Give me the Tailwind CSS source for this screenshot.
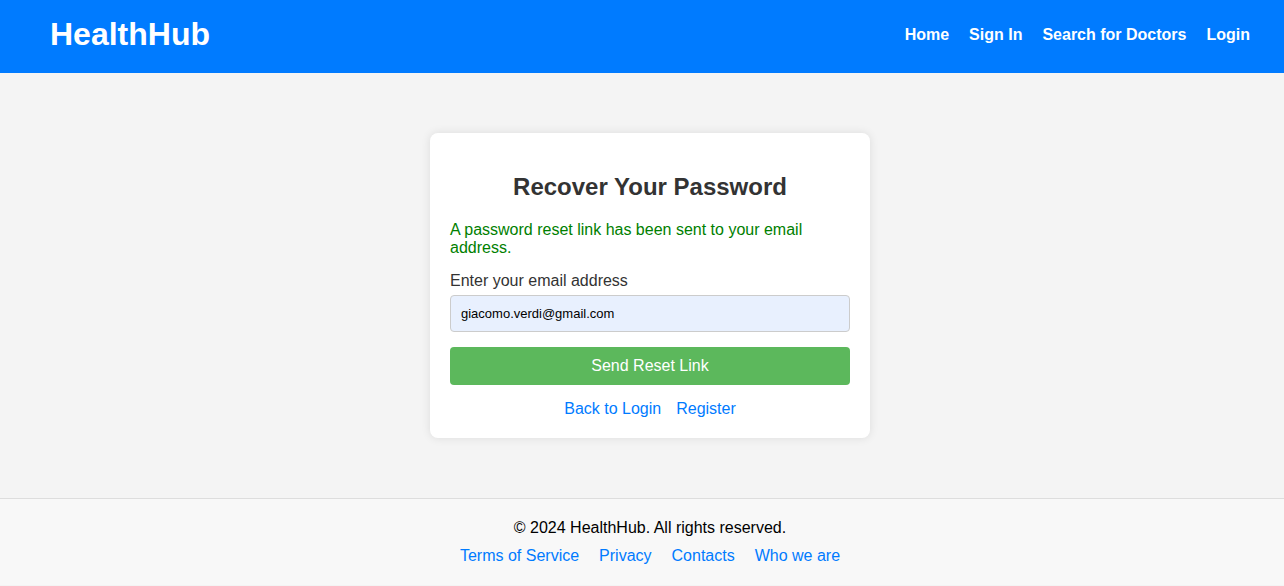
<!DOCTYPE html>
<html lang="en">
<head>
<meta charset="utf-8">
<meta name="viewport" content="width=device-width, initial-scale=1">
<title>HealthHub - Recover Your Password</title>
<script src="https://cdn.jsdelivr.net/npm/@tailwindcss/browser@4"></script>
</head>
<body class="bg-[#f4f4f4] font-['Liberation_Sans',Arial,sans-serif] text-base leading-[18px] text-black">
<header class="flex items-start justify-between bg-[#007bff] pt-4 pr-[34px] pb-5 pl-[50px] text-white">
  <h1 class="text-[32px] leading-[37px] font-bold">HealthHub</h1>
  <nav class="flex gap-5 pt-[10px] font-bold">
    <a href="#">Home</a>
    <a href="#">Sign In</a>
    <a href="#">Search for Doctors</a>
    <a href="#">Login</a>
  </nav>
</header>
<main class="flex justify-center py-[60px] pl-4">
  <section class="w-full max-w-[440px] rounded-lg bg-white px-5 pt-10 pb-5 text-[#333] shadow-[0_0_10px_rgba(0,0,0,0.1)]">
    <h2 class="mb-5 text-center text-2xl leading-7 font-bold">Recover Your Password</h2>
    <p class="mb-[15px] text-[#008000]">A password reset link has been sent to your email address.</p>
    <form class="flex flex-col">
      <label for="email" class="mb-[5px]">Enter your email address</label>
      <input id="email" type="email" value="giacomo.verdi@gmail.com" class="mb-[15px] h-[37px] rounded border border-[#ccc] bg-[#e8f0fe] px-[10px] text-[13px] text-black">
      <button type="submit" class="h-[38px] rounded bg-[#5cb85c] text-white">Send Reset Link</button>
    </form>
    <div class="mt-[15px] flex justify-center gap-[15px] text-[#007bff]">
      <a href="#">Back to Login</a>
      <a href="#">Register</a>
    </div>
  </section>
</main>
<footer class="border-t border-[#ddd] bg-[#f8f8f8] py-5 pl-4 text-center">
  <p class="mb-[10px]">© 2024 HealthHub. All rights reserved.</p>
  <nav class="flex justify-center gap-5 text-[#007bff]">
    <a href="#">Terms of Service</a>
    <a href="#">Privacy</a>
    <a href="#">Contacts</a>
    <a href="#">Who we are</a>
  </nav>
</footer>
</body>
</html>
